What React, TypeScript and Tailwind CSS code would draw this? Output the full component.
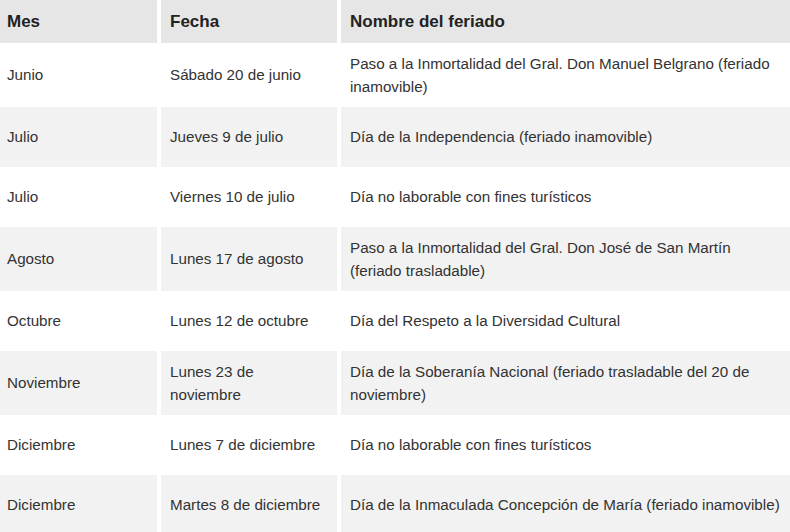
const rows = [
  ["Junio", "Sábado 20 de junio", "Paso a la Inmortalidad del Gral. Don Manuel Belgrano (feriado\ninamovible)"],
  ["Julio", "Jueves 9 de julio", "Día de la Independencia (feriado inamovible)"],
  ["Julio", "Viernes 10 de julio", "Día no laborable con fines turísticos"],
  ["Agosto", "Lunes 17 de agosto", "Paso a la Inmortalidad del Gral. Don José de San Martín\n(feriado trasladable)"],
  ["Octubre", "Lunes 12 de octubre", "Día del Respeto a la Diversidad Cultural"],
  ["Noviembre", "Lunes 23 de\nnoviembre", "Día de la Soberanía Nacional (feriado trasladable del 20 de\nnoviembre)"],
  ["Diciembre", "Lunes 7 de diciembre", "Día no laborable con fines turísticos"],
  ["Diciembre", "Martes 8 de diciembre", "Día de la Inmaculada Concepción de María (feriado inamovible)"],
]

const headers = ["Mes", "Fecha", "Nombre del feriado"]

export default function App() {
  return (
    <div className="w-[790px] bg-white font-['Liberation_Sans',Arial,sans-serif]">
      <div className="grid grid-cols-[157px_176px_1fr] gap-x-1">
        {headers.map((h, i) => (
          <div
            key={h}
            className={`h-[43px] flex items-center bg-[#e6e6e6] text-[17px] font-bold text-[#222] ${i === 0 ? "pl-[7px]" : "pl-[9px]"}`}
          >
            {h}
          </div>
        ))}
        {rows.map((row, r) =>
          row.map((cell, c) => (
            <div
              key={`${r}-${c}`}
              className={`min-h-[60px] flex items-center py-[8.5px] pr-1 whitespace-pre-line text-[15.2px] leading-[23.5px] text-[#333] ${r % 2 === 1 ? "bg-[#f2f2f2]" : "bg-white"} ${c === 0 ? "pl-[7px]" : "pl-[9px]"}`}
            >
              {cell}
            </div>
          ))
        )}
      </div>
    </div>
  )
}
